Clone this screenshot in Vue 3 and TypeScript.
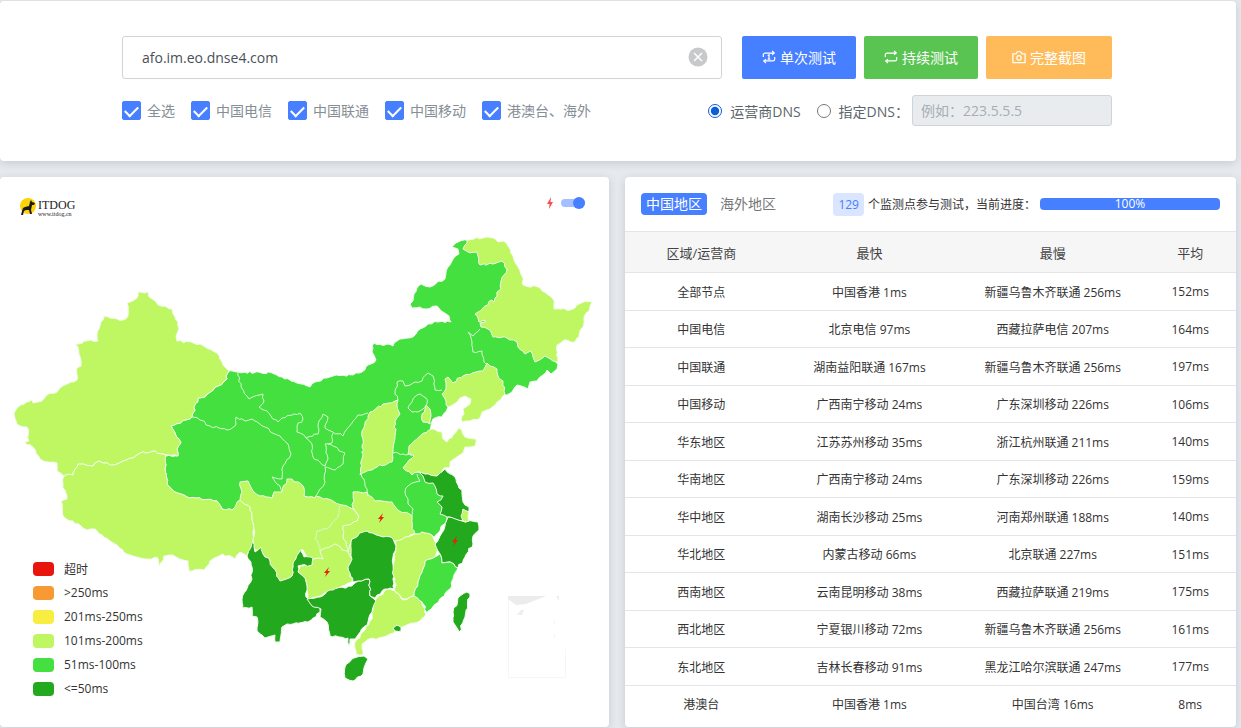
<script setup lang="ts">
import { ref } from 'vue'

type Point = [number, number]

interface Region {
  id: string
  level: 'fast' | 'good' | 'fair'
  outline: string
}

const host = ref('afo.im.eo.dnse4.com')
const dnsMode = ref('isp')
const chinaView = ref(true)
const showFlash = ref(true)

const lines = ref([
  { id: 'all', label: '全选', on: true },
  { id: 'telecom', label: '中国电信', on: true },
  { id: 'unicom', label: '中国联通', on: true },
  { id: 'mobile', label: '中国移动', on: true },
  { id: 'oversea', label: '港澳台、海外', on: true },
])

const legend = [
  { id: 'timeout', label: '超时' },
  { id: 'over250', label: '>250ms' },
  { id: 'over200', label: '201ms-250ms' },
  { id: 'over100', label: '101ms-200ms' },
  { id: 'over50', label: '51ms-100ms' },
  { id: 'under50', label: '<=50ms' },
]

const rows = [
  ['全部节点', '中国香港 1ms', '新疆乌鲁木齐联通 256ms', '152ms'],
  ['中国电信', '北京电信 97ms', '西藏拉萨电信 207ms', '164ms'],
  ['中国联通', '湖南益阳联通 167ms', '新疆乌鲁木齐联通 256ms', '197ms'],
  ['中国移动', '广西南宁移动 24ms', '广东深圳移动 226ms', '106ms'],
  ['华东地区', '江苏苏州移动 35ms', '浙江杭州联通 211ms', '140ms'],
  ['华南地区', '广西南宁移动 24ms', '广东深圳移动 226ms', '159ms'],
  ['华中地区', '湖南长沙移动 25ms', '河南郑州联通 188ms', '140ms'],
  ['华北地区', '内蒙古移动 66ms', '北京联通 227ms', '151ms'],
  ['西南地区', '云南昆明移动 38ms', '西藏拉萨联通 219ms', '175ms'],
  ['西北地区', '宁夏银川移动 72ms', '新疆乌鲁木齐联通 256ms', '161ms'],
  ['东北地区', '吉林长春移动 91ms', '黑龙江哈尔滨联通 247ms', '177ms'],
  ['港澳台', '中国香港 1ms', '中国台湾 16ms', '8ms'],
]

// Province outlines, in map units.
const regions: Region[] = [
  { id: 'north', level: 'good', outline: '229,372 238,373 272,374 282,378 297,384 310,388 315,383 333,377 353,376 362,373 368,366 376,361 372,353 374,344 393,347 400,340 413,338 420,330 428,325 438,323 451,323 449,317 437,307 427,310 420,308 412,309 410,305 413,302 414,295 421,285 430,288 445,280 446,273 452,262 459,255 458,250 452,248 460,242 467,241 480,250 510,262 520,320 558,365 557,370 551,375 547,371 543,376 537,382 530,383 528,390 517,386 512,393 507,396 480,385 460,390 448,408 442,418 433,420 431,427 432,437 425,465 445,500 447,520 435,538 422,533 415,535 380,525 300,510 227,512 222,510 217,502 187,498 175,493 167,485 165,470 166,457 178,457 177,450 181,444 175,434 171,427 192,418 198,399 205,398 218,387 227,380 226,377' },
  { id: 'xinjiang', level: 'fair', outline: '138,293 148,293 149,298 158,306 172,310 173,315 178,323 178,332 176,337 177,342 200,345 217,354 223,366 229,372 226,377 227,380 218,387 205,398 198,399 192,418 171,427 175,434 181,444 177,450 178,457 166,456 155,452 140,454 133,459 123,462 113,466 103,464 99,462 93,467 78,465 73,476 64,477 57,472 57,464 48,463 40,460 33,448 25,443 29,442 27,428 17,425 14,415 18,408 32,401 33,404 42,402 47,396 57,393 60,389 77,381 77,369 81,367 78,348 75,345 91,341 98,342 97,335 104,317 110,319 123,321 128,317 127,304 137,299' },
  { id: 'xizang', level: 'fair', outline: '64,477 73,476 78,465 93,467 99,462 103,464 113,466 123,462 133,459 140,454 155,452 166,456 165,470 167,485 175,493 187,498 217,502 222,510 232,511 240,501 250,508 252,517 254,530 254,545 247,557 240,553 235,560 223,555 210,562 204,571 189,572 188,562 183,561 173,556 164,557 159,567 157,558 148,560 137,558 127,555 115,545 110,542 95,530 87,531 73,522 64,518 61,502 67,500 63,485' },
  { id: 'heilongjiang', level: 'fair', outline: '467,241 486,238 493,239 498,243 503,242 508,247 513,257 516,265 522,277 523,286 540,289 553,300 554,310 570,311 577,306 592,302 589,312 584,318 583,328 575,343 564,341 557,346 558,363 553,362 545,357 535,363 531,352 525,355 518,348 517,343 507,339 493,338 488,330 481,328 480,324 485,323 485,321 479,323 475,315 492,301 494,303 497,293 501,290 501,282 507,270 502,262 493,265 480,266 477,253 468,253 463,250 467,244' },
  { id: 'liaoning', level: 'fair', outline: '442,395 446,390 445,380 448,378 453,384 463,377 476,373 483,372 487,364 497,370 498,377 503,382 505,395 490,410 482,413 480,419 463,423 461,421 464,415 463,410 470,405 471,400 465,397 460,399 457,403 448,408 446,402' },
  { id: 'shanxi', level: 'fair', outline: '398,401 397,407 400,415 395,422 395,437 393,453 392,463 377,468 360,476 362,460 363,440 362,432 370,413 383,405 395,402' },
  { id: 'tianjin', level: 'fair', outline: '426,406 430,410 431,417 430,425 423,423 422,415' },
  { id: 'shandong', level: 'fair', outline: '432,430 442,433 443,440 447,443 453,436 459,429 465,438 476,440 475,447 465,448 463,454 450,463 449,469 443,470 437,477 425,475 418,473 412,476 403,469 414,457 408,455 409,447 420,437' },
  { id: 'sichuan', level: 'fair', outline: '240,501 242,493 240,483 248,482 253,492 260,497 272,499 274,493 282,493 287,480 292,480 303,487 304,497 320,498 333,502 342,506 353,510 359,518 352,540 352,558 335,580 313,565 302,550 297,562 292,577 280,582 270,562 263,555 253,548 254,530 252,517 250,508' },
  { id: 'hubei', level: 'fair', outline: '353,493 367,493 375,502 392,503 397,510 412,517 414,535 397,543 391,538 380,537 367,532 352,540 348,553 343,537 343,527 357,522 359,517 353,509' },
  { id: 'jiangxi', level: 'fair', outline: '395,542 415,535 422,533 432,536 435,543 437,553 435,558 425,562 423,570 418,583 413,598 403,600 395,592 395,580 392,568 396,552' },
  { id: 'guizhou', level: 'fair', outline: '300,567 312,566 313,560 323,560 320,552 335,545 348,553 352,560 348,568 352,583 330,592 320,597 307,600 307,587 303,577 298,573' },
  { id: 'guangdong', level: 'fair', outline: '376,600 387,590 395,592 403,601 414,597 422,603 426,615 420,622 402,628 390,635 383,638 367,641 362,645 363,656 356,655 355,643 363,633 372,620 373,608' },
  { id: 'yunnan', level: 'fast', outline: '253,543 255,553 261,548 263,555 270,562 280,582 292,577 293,565 300,551 304,558 313,559 312,566 298,567 298,573 303,577 307,587 306,598 320,608 320,613 308,623 287,625 282,628 280,643 275,643 275,636 265,639 257,632 257,618 252,617 252,608 242,609 242,600 252,580 251,563 247,557' },
  { id: 'guangxi', level: 'fast', outline: '307,600 320,598 330,591 352,587 358,582 369,580 370,597 376,602 372,613 368,623 355,640 350,640 349,647 348,639 330,637 327,623 320,618 321,610 312,607' },
  { id: 'hunan', level: 'fast', outline: '352,540 363,533 367,532 380,537 391,538 396,547 393,558 394,590 385,590 375,599 370,597 369,580 358,582 353,583 348,568 352,560' },
  { id: 'jiangsu', level: 'fast', outline: '418,473 425,475 437,477 445,470 455,478 462,495 463,503 469,508 469,512 461,522 447,518 440,515 442,508 437,503 443,497 437,495 433,484 425,483 423,477' },
  { id: 'zhejiang', level: 'fast', outline: '448,518 462,522 478,523 479,531 473,537 473,545 465,558 458,569 450,563 442,564 440,555 435,545 440,537 445,527' },
  { id: 'shanghai', level: 'fair', outline: '463,510 469,513 469,522 463,522 461,517' },
  { id: 'fujian', level: 'good', outline: '440,555 442,564 450,563 458,569 453,580 450,590 427,614 422,603 414,597 418,583 423,570 425,562 435,558' },
  { id: 'hongkong', level: 'fast', outline: '393,629 397,626 401,628 401,632 395,632' },
  { id: 'hainan', level: 'fast', outline: '345,668 352,660 364,657 368,660 363,675 353,682 345,679' },
  { id: 'taiwan', level: 'fast', outline: '467,593 470,595 465,618 459,633 453,623 453,613 460,597' },
]

// Shared borders that lie inside a single-coloured area.
const borders = [
  '192,418 200,421 210,427 227,431 236,426 236,418 245,422 252,420 265,428 280,437 288,445 291,455 283,467 282,480 272,478 280,487 282,493',
  '368,414 358,416 347,430 343,437 333,433 325,429 328,418 323,415 319,422 318,435 306,439 297,433 297,427 303,420 300,414 282,419 278,423 271,417 267,412 259,408 264,402 263,395 249,400 241,388 238,373',
  '306,439 312,445 313,458 325,467 328,460 325,445 332,444 333,434',
  '328,445 345,454 343,465 335,471 325,468 325,483 320,490 315,498',
  '361,475 365,487 368,497',
  '480,330 473,337 468,333 472,343 473,353 482,352 484,363 487,366',
  '442,391 435,391 433,377 428,374 422,382 415,383 405,387 403,382 397,383 395,392 398,401',
  '408,409 412,403 417,396 420,395 426,399 427,405 423,410 418,413 412,413 408,409',
  '393,454 403,455 412,457',
  '417,475 420,482 412,484 408,487 405,493 408,500 408,505 413,510 412,517',
  '340,507 338,517 327,530 317,532 315,540 320,548 320,552',
]

const flashes: Point[] = [[381, 519], [455, 542], [327, 573]]

function parse(text: string): Point[] {
  return text.split(' ').map((pair) => pair.split(',').map(Number) as Point)
}

function noise(x: number, y: number): number {
  const n = Math.sin(x * 12.9898 + y * 78.233) * 43758.5453
  return (n - Math.floor(n)) * 2 - 1
}

// Adds small bends to each edge; both sides of a shared edge get the same bends.
function roughen(a: Point, b: Point): Point[] {
  const length = Math.hypot(b[0] - a[0], b[1] - a[1])
  const steps = Math.floor(length / 3)
  const forward = a[0] < b[0] || (a[0] === b[0] && a[1] < b[1])
  const [s, e] = forward ? [a, b] : [b, a]
  const bends: Point[] = []
  for (let i = 1; i < steps; i++) {
    const t = i / steps
    const x = s[0] + (e[0] - s[0]) * t
    const y = s[1] + (e[1] - s[1]) * t
    bends.push([x + noise(x, y) * 1.1, y + noise(y, x) * 1.1])
  }
  return forward ? bends : bends.reverse()
}

function toPath(text: string, closed: boolean): string {
  const points = parse(text)
  const all: Point[] = []
  points.forEach((point, i) => {
    all.push(point)
    const next = points[i + 1] ?? (closed ? points[0] : undefined)
    if (next) all.push(...roughen(point, next))
  })
  return 'M' + all.map(([x, y]) => `${x.toFixed(1)} ${y.toFixed(1)}`).join('L') + (closed ? 'Z' : '')
}
</script>

<template>
  <main class="page">
    <form class="card query" @submit.prevent>
      <div class="line">
        <div class="host">
          <input v-model="host" class="host-input" type="text" aria-label="域名" />
          <button class="clear" type="button" aria-label="清空" @click="host = ''">
            <svg viewBox="0 0 20 20" width="20" height="20">
              <circle cx="10" cy="10" r="9.500" fill="#c8c9cb" />
              <path d="M6 6l8 8M14 6l-8 8" stroke="#fff" stroke-width="1.5" />
            </svg>
          </button>
        </div>
        <div class="actions">
          <button class="btn blue" type="submit">
            <svg class="ico" viewBox="0 0 16 16">
              <path d="M1.500 8V5.500a2 2 0 0 1 2-2H14M11.500 1l2.500 2.500-2.500 2M14.500 8v2.500a2 2 0 0 1-2 2H2M4.500 15L2 12.500l2.500-2M6.500 6.500L8 5.500v5M6.500 10.500h3" />
            </svg>
            单次测试
          </button>
          <button class="btn green" type="button">
            <svg class="ico" viewBox="0 0 16 16">
              <path d="M1.500 8V5.500a2 2 0 0 1 2-2H14M11.500 1l2.500 2.500-2.500 2M14.500 8v2.500a2 2 0 0 1-2 2H2M4.500 15L2 12.500l2.500-2" />
            </svg>
            持续测试
          </button>
          <button class="btn orange" type="button">
            <svg class="ico" viewBox="0 0 16 16">
              <path d="M1 4.500h3.500l1.500-2.500h4l1.500 2.500h3.500v10h-14z" />
              <circle cx="8" cy="9" r="2.500" />
            </svg>
            完整截图
          </button>
        </div>
      </div>
      <div class="line options">
        <div class="checks">
          <label v-for="line in lines" :key="line.id" class="check">
            <input v-model="line.on" type="checkbox" />
            <span>{{ line.label }}</span>
          </label>
        </div>
        <div class="dns">
          <label class="radio"><input v-model="dnsMode" type="radio" name="dns" value="isp" />运营商DNS</label>
          <label class="radio"><input v-model="dnsMode" type="radio" name="dns" value="custom" />指定DNS：</label>
          <input class="dns-input" type="text" placeholder="例如：223.5.5.5" aria-label="指定DNS" :disabled="dnsMode === 'isp'" />
        </div>
      </div>
    </form>

    <div class="panels">
      <section class="card map-card">
        <header class="map-head">
          <div class="brand">
            <svg viewBox="0 0 18 18" width="18" height="18">
              <circle cx="8" cy="8" r="8" fill="#fbd30b" />
              <path d="M1 17l1-4 1-3 2-1 4-1 1-4 1-2 1 2 3 1-1 2h-2l-1 5 1 4h-2l-1-4-3 0-2 1-1 4z" fill="#1d1a16" />
            </svg>
            <div class="brand-text">
              <span class="brand-name">ITDOG</span>
              <span class="brand-url">www.itdog.cn</span>
            </div>
          </div>
          <label class="flash-toggle">
            <svg viewBox="0 0 10 12" width="10" height="12"><path d="M6 0L2 7h2.500L4 12l4-7H5.500z" fill="#f5504a" /></svg>
            <input v-model="showFlash" type="checkbox" aria-label="闪电标记" />
          </label>
        </header>
        <svg class="map" viewBox="0 219 609 508" role="img" aria-label="中国地图">
          <g>
            <path d="M508.500 598V678.500H565.500V650" fill="none" stroke="#f6f6f6" />
            <path d="M508 597h38l-20 8-10 1-8-6z" fill="#ececec" />
            <path d="M521 611h3l-2 5h-5zM556 597h3v5zM554 622h1v5zM554 636h1l-1 4z" fill="#eee" />
          </g>
          <path v-for="r in regions" :key="r.id" :class="['region', r.level]" :d="toPath(r.outline, true)" />
          <path v-for="(b, i) in borders" :key="i" class="border" :d="toPath(b, false)" />
          <g v-if="showFlash">
            <path
              v-for="f in flashes"
              :key="f[0]"
              :transform="`translate(${f[0]} ${f[1]})`"
              d="M2-5L-3 1h2.500L-2 5l5-6H.500z"
              fill="#e8200c"
            />
          </g>
        </svg>
        <ul class="legend">
          <li v-for="item in legend" :key="item.id">
            <span :class="['swatch', item.id]"></span>{{ item.label }}
          </li>
        </ul>
      </section>

      <section class="card result-card">
        <header class="result-head">
          <div class="tabs">
            <button type="button" :class="['tab', { active: chinaView }]" @click="chinaView = true">中国地区</button>
            <button type="button" :class="['tab', { active: !chinaView }]" @click="chinaView = false">海外地区</button>
          </div>
          <div class="status">
            <span class="count">129</span>
            <span>个监测点参与测试，当前进度：</span>
            <div class="progress" role="progressbar" aria-valuenow="100" aria-valuemin="0" aria-valuemax="100">100%</div>
          </div>
        </header>
        <table class="result">
          <thead>
            <tr>
              <th class="c-area">区域/运营商</th>
              <th class="c-node">最快</th>
              <th class="c-node">最慢</th>
              <th class="c-avg">平均</th>
            </tr>
          </thead>
          <tbody>
            <tr v-for="row in rows" :key="row[0]">
              <td v-for="(cell, i) in row" :key="i">{{ cell }}</td>
            </tr>
          </tbody>
        </table>
      </section>
    </div>
  </main>
</template>

<style>
body {
  background: #e6eaee;
}
</style>

<style scoped>
.page,
.page button,
.page input {
  font-family: "Open Sans", "Noto Sans CJK SC", sans-serif;
}

.page {
  padding: 1px 5px 1px 0;
  color: #333;
  font-size: 12px;
}

.page * {
  box-sizing: border-box;
}

.card {
  background: #fff;
  border-radius: 4px;
  box-shadow: 0 2px 8px rgba(60, 80, 100, 0.2);
}

.query {
  padding: 35px 124px 35px 122px;
}

.line {
  display: flex;
  align-items: center;
  gap: 20px;
}

.host {
  position: relative;
  flex: 1;
}

.host-input {
  display: block;
  width: 100%;
  height: 43px;
  padding: 0 48px 1px 19px;
  border: 1px solid #ced4da;
  border-radius: 3px;
  color: #495057;
  font-size: 14px;
}

.clear {
  position: absolute;
  top: 11px;
  right: 14px;
  padding: 0;
  border: 0;
  background: none;
}

.clear svg {
  display: block;
}

.actions {
  display: flex;
  gap: 8px;
}

.btn {
  display: flex;
  align-items: center;
  justify-content: center;
  gap: 4px;
  height: 43px;
  padding: 0 20px 1px;
  border: 0;
  border-radius: 2px;
  color: #fff;
  font-size: 14px;
}

.blue {
  background: #467fff;
}

.green {
  background: #5ac453;
}

.orange {
  padding: 0 26px 1px;
  background: #ffbb59;
}

.ico {
  width: 14px;
  height: 14px;
  fill: none;
  stroke: currentColor;
  stroke-width: 1.4;
}

.options {
  justify-content: space-between;
  margin-top: 16px;
}

.checks,
.dns {
  display: flex;
  align-items: center;
  gap: 16px;
}

.check {
  display: flex;
  align-items: center;
  gap: 6px;
  color: #868e96;
  font-size: 14px;
  white-space: nowrap;
}

.check span {
  padding-bottom: 2px;
}

.check input {
  display: grid;
  place-items: center;
  width: 19px;
  height: 19px;
  margin: 0;
  appearance: none;
  border: 1px solid #467fff;
  border-radius: 2px;
}

.check input:checked {
  background: #467fff;
}

.check input:checked::before {
  content: "";
  width: 11px;
  height: 6px;
  border: solid #fff;
  border-width: 0 0 2px 2px;
  transform: translateY(-1px) rotate(-45deg);
}

.radio {
  display: flex;
  align-items: center;
  gap: 8px;
  color: #5c646c;
  font-size: 14px;
  white-space: nowrap;
}

.radio input {
  width: 14px;
  height: 14px;
  margin: 0;
  accent-color: #0b5ed7;
}

.dns-input {
  width: 200px;
  height: 31px;
  margin-left: -13px;
  padding: 0 8px;
  border: 1px solid #ced4da;
  border-radius: 3px;
  background: #e9ecef;
  font-size: 14px;
}

.dns-input::placeholder {
  color: #a6adb4;
}

.panels {
  display: grid;
  grid-template-columns: 609fr 611fr;
  gap: 16px;
  margin-top: 16px;
}

.map-card {
  position: relative;
}

.map-head {
  display: flex;
  align-items: flex-start;
  justify-content: space-between;
  height: 41px;
  padding: 20px 24px 0 20px;
}

.brand {
  display: flex;
  align-items: center;
}

.brand-text {
  display: flex;
  flex-direction: column;
  padding-top: 2px;
  color: #222;
  font-family: "Liberation Serif", serif;
}

.brand-name {
  font-size: 12px;
  line-height: 12px;
}

.brand-url {
  font-size: 6px;
  line-height: 6px;
}

.flash-toggle {
  display: flex;
  align-items: center;
  gap: 6px;
}

.flash-toggle input {
  display: flex;
  align-items: center;
  width: 24px;
  height: 8px;
  margin: 0;
  appearance: none;
  border-radius: 4px;
  background: #a3bfff;
}

.flash-toggle input::before {
  content: "";
  width: 12px;
  height: 12px;
  border-radius: 50%;
  background: #467fff;
}

.flash-toggle input:checked {
  justify-content: flex-end;
}

.map {
  display: block;
  width: 100%;
}

.region {
  stroke: #f4fbee;
  stroke-width: 1;
  stroke-linejoin: round;
}

.fast {
  fill: #23a91e;
}

.good {
  fill: #43e03f;
}

.fair {
  fill: #bef761;
}

.border {
  fill: none;
  stroke: #d9f8d2;
  stroke-width: 1;
}

.legend {
  position: absolute;
  bottom: 26px;
  left: 33px;
  margin: 0;
  padding: 0;
  list-style: none;
}

.legend li {
  display: flex;
  align-items: center;
  gap: 10px;
  height: 24px;
}

.swatch {
  width: 21px;
  height: 14px;
  border-radius: 4px;
}

.timeout {
  background: #e8150d;
}

.over250 {
  background: #f79a34;
}

.over200 {
  background: #f8ee42;
}

.over100 {
  background: #bef761;
}

.over50 {
  background: #43e03f;
}

.under50 {
  background: #23a91e;
}

.result-head {
  display: flex;
  align-items: center;
  justify-content: space-between;
  height: 54px;
  padding: 0 16px;
}

.tabs,
.status {
  display: flex;
  align-items: center;
}

.tabs {
  gap: 8px;
}

.tab {
  height: 22px;
  padding: 0 5px;
  border: 0;
  border-radius: 4px;
  background: none;
  color: #777;
  font-size: 14px;
  line-height: 22px;
}

.tab.active {
  background: #467fff;
  color: #fff;
}

.status {
  gap: 4px;
  white-space: nowrap;
}

.count {
  padding: 0 5px;
  border-radius: 4px;
  background: #dae5ff;
  color: #467fff;
  font-size: 12px;
  line-height: 23px;
}

.progress {
  width: 180px;
  border-radius: 4px;
  background: #467fff;
  color: #fff;
  line-height: 12px;
  text-align: center;
}

.result {
  width: 100%;
  margin-bottom: 4px;
  border-collapse: collapse;
  table-layout: fixed;
  text-align: center;
}

.result th {
  height: 41px;
  padding: 0;
  border: solid #e3e5e8;
  border-width: 1px 0;
  background: #f6f6f7;
  color: #444;
  font-size: 13px;
  font-weight: 400;
}

.c-area {
  width: 25%;
}

.c-node {
  width: 30%;
}

.c-avg {
  width: 15%;
}

.result td {
  height: 37px;
  padding: 0;
  border-bottom: 1px solid #e3e5e8;
  white-space: nowrap;
}

.result tr:nth-child(odd) td {
  height: 38px;
}

.result tr:last-child td {
  border-bottom: 0;
}
</style>
